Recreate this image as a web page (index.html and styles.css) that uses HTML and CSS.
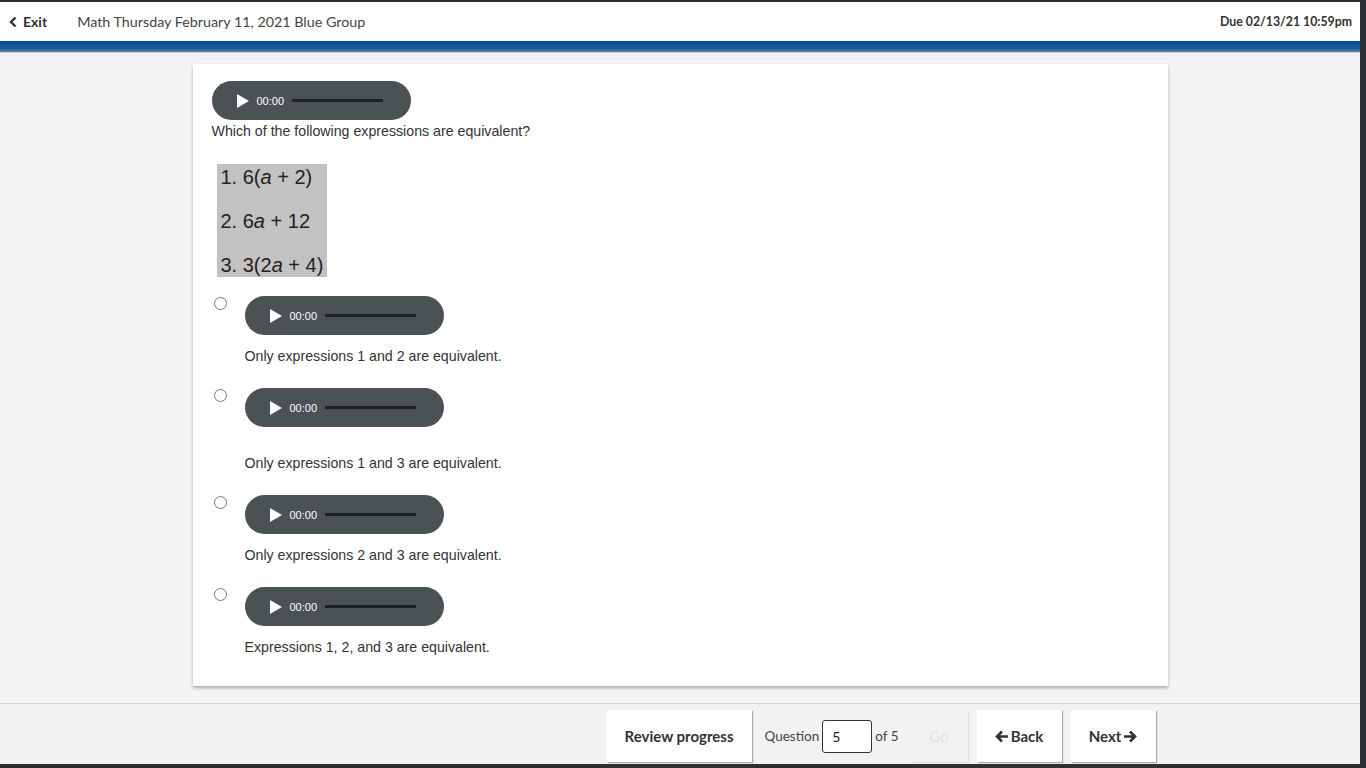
FILE: index.html
```html
<!DOCTYPE html>
<html lang="en">
  <head>
    <meta charset="UTF-8" />
    <meta name="viewport" content="width=device-width, initial-scale=1.0" />
    <title>Math Thursday February 11, 2021 Blue Group</title>
    <link rel="stylesheet" href="styles.css">
  </head>
  <body>
    <div class="app">
      <header>
        <a href="#" class="exit">
          <svg width="8" height="12" viewBox="0 0 8 12"><path d="M6.5 1.5 2 6l4.5 4.5" fill="none" stroke="#333" stroke-width="2.4"/></svg>
          Exit
        </a>
        <span class="title">Math Thursday February 11, 2021 Blue Group</span>
        <span class="due">Due 02/13/21 10:59pm</span>
      </header>
      <div class="blue-bar"></div>
      <main>
        <div class="card">
          <div class="player">
            <svg class="play" width="12" height="14" viewBox="0 0 12 14"><path d="M0 0 12 7 0 14z" fill="#fff"/></svg>
            <span class="time">00:00</span>
            <span class="track"></span>
          </div>
          <p class="prompt">Which of the following expressions are equivalent?</p>
          <div class="math">
            <div>1. 6(<i>a</i> + 2)</div>
            <div>2. 6<i>a</i> + 12</div>
            <div>3. 3(2<i>a</i> + 4)</div>
          </div>

          <div class="choices">
            <label class="choice">
              <input type="radio" name="answer" />
              <div class="choice-body">
                <div class="player">
                  <svg class="play" width="12" height="14" viewBox="0 0 12 14"><path d="M0 0 12 7 0 14z" fill="#fff"/></svg>
                  <span class="time">00:00</span>
                  <span class="track"></span>
                </div>
                <p>Only expressions 1 and 2 are equivalent.</p>
              </div>
            </label>
            <label class="choice">
              <input type="radio" name="answer" />
              <div class="choice-body">
                <div class="player">
                  <svg class="play" width="12" height="14" viewBox="0 0 12 14"><path d="M0 0 12 7 0 14z" fill="#fff"/></svg>
                  <span class="time">00:00</span>
                  <span class="track"></span>
                </div>
                <p class="spaced">Only expressions 1 and 3 are equivalent.</p>
              </div>
            </label>
            <label class="choice">
              <input type="radio" name="answer" />
              <div class="choice-body">
                <div class="player">
                  <svg class="play" width="12" height="14" viewBox="0 0 12 14"><path d="M0 0 12 7 0 14z" fill="#fff"/></svg>
                  <span class="time">00:00</span>
                  <span class="track"></span>
                </div>
                <p>Only expressions 2 and 3 are equivalent.</p>
              </div>
            </label>
            <label class="choice">
              <input type="radio" name="answer" />
              <div class="choice-body">
                <div class="player">
                  <svg class="play" width="12" height="14" viewBox="0 0 12 14"><path d="M0 0 12 7 0 14z" fill="#fff"/></svg>
                  <span class="time">00:00</span>
                  <span class="track"></span>
                </div>
                <p>Expressions 1, 2, and 3 are equivalent.</p>
              </div>
            </label>
          </div>
        </div>
      </main>
      <footer>
        <div class="nav">
          <button class="btn">Review progress</button>
          <div class="jump">
            <span>Question</span>
            <input type="text" value="5" />
            <span>of 5</span>
          </div>
          <button class="btn go" disabled>Go</button>
          <button class="btn arrow">
            <svg width="14" height="13" viewBox="0 0 14 13"><path d="M7 1.5 2 6.5l5 5M2.5 6.5H13" fill="none" stroke="#333" stroke-width="2.6"/></svg>
            Back
          </button>
          <button class="btn arrow">
            Next
            <svg width="14" height="13" viewBox="0 0 14 13"><path d="M7 1.5l5 5-5 5M11.5 6.5H1" fill="none" stroke="#333" stroke-width="2.6"/></svg>
          </button>
        </div>
      </footer>
    </div>
  </body>
</html>
```

FILE: styles.css
```css
* {
  box-sizing: border-box;
}

body {
  margin: 0;
  padding: 2px 6px 4px 0;
  background-color: #2b3134;
  font-family: Lato, "Open Sans", sans-serif;
  color: #333;
}

.app {
  height: 762px;
  display: flex;
  flex-direction: column;
  background-color: #f3f3f3;
}

header {
  height: 39px;
  display: flex;
  align-items: center;
  padding: 0 8px 0 9px;
  background-color: #fff;
}

.exit {
  display: flex;
  align-items: center;
  gap: 6px;
  color: #333;
  font-size: 14px;
  font-weight: 700;
  text-decoration: none;
}

.title {
  margin-left: 30px;
  font-size: 14.3px;
  color: #444;
}

.due {
  margin-left: auto;
  font-size: 12.3px;
  font-weight: 700;
  color: #333;
}

.blue-bar {
  height: 12px;
  background: linear-gradient(#0b4a8c, #1a5c9c 70%, #5f86ad);
  border-bottom: 1px solid #c9ced3;
}

main {
  flex: 1;
  padding-top: 11px;
}

.card {
  width: 975px;
  margin: 0 auto;
  padding: 17px 19px 31px;
  background-color: #fff;
  box-shadow: 0 2px 3px rgba(0, 0, 0, 0.3);
  font-family: "Liberation Sans", Arial, sans-serif;
  font-size: 14.2px;
  color: #333;
}

.player {
  width: 199px;
  height: 39px;
  display: flex;
  align-items: center;
  padding-left: 25px;
  border-radius: 20px;
  background-color: #4b5254;
}

.time {
  margin-left: 8px;
  color: #fff;
  font-size: 11px;
}

.track {
  width: 91px;
  height: 3px;
  margin-left: 8px;
  background-color: #1e2224;
}

.prompt {
  margin: 3px 0 25px;
}

.math {
  display: inline-block;
  margin-left: 5px;
  padding: 0 4px;
  background-color: #c2c2c2;
  font-size: 20px;
  color: #222;
}

.math div {
  height: 44px;
  line-height: 26px;
}

.math div:last-child {
  height: 25px;
}

.math i {
  font-style: italic;
}

.choices {
  margin-top: 19px;
}

.choice {
  display: flex;
  align-items: flex-start;
}

.choice input {
  width: 13px;
  height: 13px;
  margin: 1px 0 0 2px;
}

.choice-body {
  margin-left: 18px;
}

.choice p {
  margin: 13px 0 24px;
}

.choice p.spaced {
  margin-top: 28px;
}

.choice:last-child p {
  margin-bottom: 0;
}

footer {
  height: 61px;
  border-top: 1px solid #d2d2d2;
  padding-top: 6px;
  background-color: #f2f2f2;
}

.nav {
  width: 975px;
  margin: 0 auto;
  display: flex;
  justify-content: flex-end;
  padding-right: 12px;
}

.btn {
  height: 52px;
  padding: 0 18px;
  border: none;
  background-color: #fff;
  box-shadow: 1px 1px 1px rgba(0, 0, 0, 0.3);
  font-family: Lato, "Open Sans", sans-serif;
  font-size: 15px;
  font-weight: 700;
  color: #333;
  cursor: pointer;
}

.jump {
  height: 52px;
  display: flex;
  align-items: center;
  gap: 3px;
  padding: 0 12px;
  margin-left: 1px;
  font-size: 13.5px;
  color: #444;
}

.jump input {
  width: 50px;
  height: 33px;
  border: 1px solid #333;
  border-radius: 3px;
  padding: 0 9px;
  font-family: Lato, "Open Sans", sans-serif;
  font-size: 14px;
  color: #222;
}

.btn.go {
  width: 57px;
  background-color: #f1f1f1;
  box-shadow: 1px 1px 1px rgba(0, 0, 0, 0.08);
  color: #e2e2e2;
  font-weight: 400;
  cursor: default;
}

.btn.arrow {
  width: 85px;
  margin-left: 9px;
  display: flex;
  align-items: center;
  justify-content: center;
  gap: 2px;
  padding: 0;
}
```
